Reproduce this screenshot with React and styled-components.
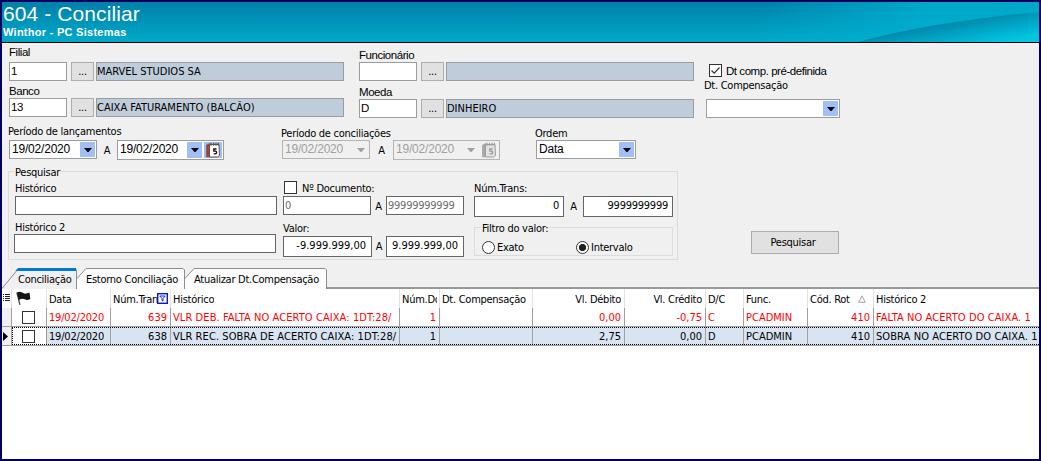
import React from "react";
import styled, { createGlobalStyle, css } from "styled-components";

const columns = [
  { key: "date", title: "Data" },
  { key: "trans", title: "Núm.Trans", right: true, filter: true },
  { key: "history", title: "Histórico" },
  { key: "doc", title: "Núm.Doc", right: true, clipped: true },
  { key: "comp", title: "Dt. Compensação" },
  { key: "debit", title: "Vl. Débito", right: true },
  { key: "credit", title: "Vl. Crédito", right: true },
  { key: "dc", title: "D/C" },
  { key: "func", title: "Func." },
  { key: "routine", title: "Cód. Rot", right: true, sorted: true },
  { key: "history2", title: "Histórico 2" },
];

const rows = [
  {
    date: "19/02/2020",
    trans: "639",
    history: "VLR DEB. FALTA NO ACERTO CAIXA: 1DT:28/",
    doc: "1",
    comp: "",
    debit: "0,00",
    credit: "-0,75",
    dc: "C",
    func: "PCADMIN",
    routine: "410",
    history2: "FALTA NO ACERTO DO CAIXA. 1",
    negative: true,
  },
  {
    date: "19/02/2020",
    trans: "638",
    history: "VLR REC. SOBRA DE ACERTO CAIXA: 1DT:28/",
    doc: "1",
    comp: "",
    debit: "2,75",
    credit: "0,00",
    dc: "D",
    func: "PCADMIN",
    routine: "410",
    history2: "SOBRA NO ACERTO DO CAIXA. 1",
    selected: true,
  },
];

function Lookup({ label, code, name, gap }) {
  return (
    <LookupField>
      <PlainLabel $gap={gap}>{label}</PlainLabel>
      <LookupLine>
        <CodeInput>{code}</CodeInput>
        <DotsButton>...</DotsButton>
        <NameBox>{name}</NameBox>
      </LookupLine>
    </LookupField>
  );
}

function Arrow({ color = "#000" }) {
  return (
    <svg width="8" height="4" viewBox="0 0 8 4">
      <path d="M0 0h8L4.500 4h-1z" fill={color} />
    </svg>
  );
}

function Combo({ width, disabled, calendar, children }) {
  return (
    <ComboBox $width={width} $disabled={disabled} $tall={calendar}>
      <span>{children}</span>
      <ComboButton $disabled={disabled}>
        <Arrow color={disabled ? "#a0a0a0" : "#000"} />
      </ComboButton>
      {calendar && (
        <ComboButton $disabled={disabled} $wide>
          <Calendar disabled={disabled} />
        </ComboButton>
      )}
    </ComboBox>
  );
}

function Calendar({ disabled }) {
  const red = disabled ? "#a8a8a8" : "#c03a22";
  const line = disabled ? "#9c9c9c" : "#5c5450";
  const page = disabled ? "#e2e2e2" : "#fff";
  return (
    <svg width="16" height="16" viewBox="0 0 16 16">
      <path d="M1.500 3L5 1.500v13L1.500 15z" fill={red} stroke={line} strokeWidth="0.6" />
      <path d="M4.500 2.500h9.500l.5 11-2 1.500h-8z" fill={page} stroke={line} />
      <path d="M6 .8v3M8.500 .8v3M11 .8v3M13.300 .8v3" stroke={line} strokeWidth="1.200" />
      <path
        d="M11.500 7H8.800v2.200h1.800q1.200.2 1 1.600-.2 1.200-2.900 1"
        fill="none"
        stroke={disabled ? line : "#111"}
        strokeWidth="1.300"
      />
    </svg>
  );
}

export default function App() {
  return (
    <Window>
      <GlobalStyle />
      <Header>
        <HeaderArt viewBox="0 0 1037 40" preserveAspectRatio="none">
          <defs>
            <linearGradient id="base" x1="0" y1="0" x2="0" y2="1">
              <stop offset="0" stopColor="#0080a9" />
              <stop offset="1" stopColor="#00a9c9" />
            </linearGradient>
            <linearGradient id="glow" gradientUnits="userSpaceOnUse" x1="760" y1="0" x2="900" y2="60">
              <stop offset="0" stopColor="#00b0d0" stopOpacity="0" />
              <stop offset="1" stopColor="#00b0d0" stopOpacity="0.8" />
            </linearGradient>
            <linearGradient id="wave" gradientUnits="userSpaceOnUse" x1="950" y1="20" x2="955" y2="48">
              <stop offset="0" stopColor="#0088ac" />
              <stop offset="1" stopColor="#00c6e2" />
            </linearGradient>
          </defs>
          <rect width="1037" height="40" fill="url(#base)" />
          <path d="M700 0H1037V40H700z" fill="url(#glow)" />
          <path d="M856 40Q930 20 1037 10V40z" fill="url(#wave)" />
        </HeaderArt>
        <Title>604 - Conciliar</Title>
        <Subtitle>Winthor - PC Sistemas</Subtitle>
      </Header>

      <Form>
        <LookupRow>
          <LookupColumn>
            <Lookup label="Filial" code="1" name="MARVEL STUDIOS SA" gap={3} />
            <Lookup label="Banco" code="13" name="CAIXA FATURAMENTO (BALCÃO)" gap={0} />
          </LookupColumn>
          <LookupColumn $second>
            <Lookup label="Funcionário" code="" name="" gap={0} />
            <Lookup label="Moeda" code="D" name="DINHEIRO" gap={0} />
          </LookupColumn>
          <CompColumn>
            <CheckLine>
              <CheckBox>
                <svg width="11" height="11" viewBox="0 0 11 11">
                  <path d="M1.500 5.500l2.700 2.700 5.300-5.700" fill="none" stroke="#333" strokeWidth="1.200" />
                </svg>
              </CheckBox>
              <PlainText>Dt comp. pré-definida</PlainText>
            </CheckLine>
            <CompLabel>Dt. Compensação</CompLabel>
            <Combo width={134} />
          </CompColumn>
        </LookupRow>

        <PeriodRow>
          <Period>
            <Label $lift={2}>Período de lançamentos</Label>
            <PeriodLine>
              <Combo width={88}>19/02/2020</Combo>
              <Until $width={20}>A</Until>
              <Combo width={107} calendar>
                19/02/2020
              </Combo>
            </PeriodLine>
          </Period>
          <Period $left={57}>
            <Label>Período de conciliações</Label>
            <PeriodLine>
              <Combo width={88} disabled>
                19/02/2020
              </Combo>
              <Until $width={23}>A</Until>
              <Combo width={107} disabled calendar>
                19/02/2020
              </Combo>
            </PeriodLine>
          </Period>
          <Period $left={35}>
            <Label>Ordem</Label>
            <Combo width={100}>Data</Combo>
          </Period>
        </PeriodRow>

        <SearchRow>
          <Group>
            <Legend>Pesquisar</Legend>
            <HistoryColumn>
              <Label>Histórico</Label>
              <Input $width={262} />
              <Label $top={5} $lift={-1}>
                Histórico 2
              </Label>
              <Input $width={262} $shift />
            </HistoryColumn>
            <ValueColumn>
              <CheckLine $tight>
                <CheckBox />
                <Label>Nº Documento:</Label>
              </CheckLine>
              <PeriodLine>
                <Input $width={88} $muted>
                  0
                </Input>
                <Until $width={15}>A</Until>
                <Input $width={78} $muted>
                  99999999999
                </Input>
              </PeriodLine>
              <Label $top={5}>Valor:</Label>
              <PeriodLine>
                <Input $width={89} $tall $spacing={0}>
                  -9.999.999,00
                </Input>
                <Until $width={14}>A</Until>
                <Input $width={78} $tall $spacing={0}>
                  9.999.999,00
                </Input>
              </PeriodLine>
            </ValueColumn>
            <TransColumn>
              <Label>Núm.Trans:</Label>
              <PeriodLine>
                <Input $width={90} $tall>
                  0
                </Input>
                <Until $width={19}>A</Until>
                <Input $width={90} $tall>
                  9999999999
                </Input>
              </PeriodLine>
              <FilterGroup>
                <Legend $inner>Filtro do valor:</Legend>
                <RadioItem $width={94}>
                  <Radio />
                  Exato
                </RadioItem>
                <RadioItem>
                  <Radio $checked />
                  Intervalo
                </RadioItem>
              </FilterGroup>
            </TransColumn>
          </Group>
          <SearchButton>Pesquisar</SearchButton>
        </SearchRow>

        <Tabs>
          <Tab $width={75} $active>
            <TabShape width={75} active />
            <span>Conciliação</span>
          </Tab>
          <Tab $width={108}>
            <TabShape width={108} />
            <span>Estorno Conciliação</span>
          </Tab>
          <Tab $width={142}>
            <TabShape width={142} />
            <span>Atualizar Dt.Compensação</span>
          </Tab>
        </Tabs>
      </Form>

      <Grid>
        <GridLine>
          <Cell $head $mark>
            <ColumnsIcon />
          </Cell>
          <Cell $head>
            <FlagIcon />
          </Cell>
          {columns.map((col) => (
            <Cell key={col.key} $head $right={col.right && !col.filter && !col.clipped && !col.sorted}>
              <HeadText>{col.title}</HeadText>
              {col.filter && <FilterIcon />}
              {col.sorted && <SortIcon />}
            </Cell>
          ))}
        </GridLine>
        {rows.map((row) => (
          <GridLine key={row.trans} $row $negative={row.negative} $selected={row.selected}>
            <Cell $mark $gray>
              {row.selected && (
                <svg width="5" height="9" viewBox="0 0 5 9">
                  <path d="M0 0l5 4.500L0 9z" />
                </svg>
              )}
            </Cell>
            <Cell $check>
              <CheckBox />
            </Cell>
            {columns.map((col) => (
              <Cell key={col.key} $right={col.right}>
                <CellText $spacing={col.key === "date" ? -0.2 : col.key.startsWith("history") ? 0.08 : 0}>
                  {row[col.key]}
                </CellText>
              </Cell>
            ))}
          </GridLine>
        ))}
      </Grid>
    </Window>
  );
}

// inactive tabs start half way up the slant, tucked behind the previous one
function TabShape({ width, active }) {
  const start = active ? "M0 20.500L16.500 .5" : "M0 10.500L9 .5";
  return (
    <svg width={width} height="21" viewBox={`0 0 ${width} 21`}>
      <path d={`${start}H${width - 2}l1.500 1.500V21H0z`} fill={active ? "#f0f0f0" : "#fcfcfc"} />
      <path d={`${start}H${width - 2}l1.500 1.500V21`} fill="none" stroke="#8a8c90" />
      {active && <path d={`M16 0H${width - 1}v3H13.500z`} fill="#0078d7" />}
    </svg>
  );
}

function ColumnsIcon() {
  return (
    <svg width="7" height="9" viewBox="0 0 7 9" shapeRendering="crispEdges">
      <path d="M0 .5h1M2 .5h5M0 2.500h1M2 2.500h5M0 4.500h1M2 4.500h5M0 6.500h1M2 6.500h5" stroke="#222" />
    </svg>
  );
}

function FlagIcon() {
  return (
    <svg width="17" height="15" viewBox="-2 0 17 15">
      <path d="M.8 1.500L4 14" stroke="#444" strokeWidth="1.200" />
      <path d="M1 1.500q3-1.500 5.500.3t7-.3l.8 6.500q-3.300 1.800-5.500.3t-6 .7z" fill="#151515" />
    </svg>
  );
}

function FilterIcon() {
  return (
    <svg width="11" height="11" viewBox="0 0 11 11">
      <rect x=".7" y=".7" width="9.600" height="9.600" fill="#fff" stroke="#0018e8" strokeWidth="1.400" />
      <path d="M2.800 3h5.400L6 5.500v2.700l-1-.8V5.500z" fill="#fff" stroke="#0018e8" strokeWidth=".9" />
    </svg>
  );
}

function SortIcon() {
  return (
    <SortSvg width="8" height="8" viewBox="0 0 8 8">
      <path d="M4 .8L7.300 7.300H.7z" fill="none" stroke="#999" strokeWidth=".9" />
    </SortSvg>
  );
}

// css in js

const GlobalStyle = createGlobalStyle`
  * {
    box-sizing: border-box;
  }
  body {
    margin: 0;
    font-family: "DejaVu Sans Condensed", "DejaVu Sans", sans-serif;
    font-stretch: condensed;
    font-size: 11px;
    letter-spacing: -0.27px;
    color: #000;
  }
  svg {
    display: block;
    flex: none;
  }
`;

const plain = css`
  font-family: "Liberation Sans", Arial, sans-serif;
  font-stretch: normal;
  font-size: 11.5px;
  letter-spacing: -0.45px;
`;

const SortSvg = styled.svg`
  margin-left: 8px;
`;

const Window = styled.div`
  display: flex;
  flex-direction: column;
  width: 1041px;
  height: 461px;
  border: 2px solid #00005c;
  background: #fff;
  overflow: hidden;
  white-space: nowrap;
`;

const Header = styled.header`
  position: relative;
  flex: none;
  height: 41px;
  border-bottom: 1px solid #000;
  padding-left: 1px;
  color: #fff;
  font-family: "Liberation Sans", Arial, sans-serif;
  font-stretch: normal;
`;

const HeaderArt = styled.svg`
  position: absolute;
  inset: 0;
  width: 100%;
  height: 40px;
`;

const Title = styled.h1`
  position: relative;
  margin: 0;
  font-size: 21px;
  font-weight: 400;
  line-height: 23px;
  letter-spacing: 0.1px;
`;

const Subtitle = styled.div`
  position: relative;
  font-size: 11px;
  font-weight: 700;
  line-height: 14px;
  letter-spacing: 0.27px;
`;

const Form = styled.main`
  flex: none;
  height: 246px;
  background: #f0f0f0;
`;

const LookupRow = styled.div`
  display: flex;
  height: 80px;
  padding-left: 7px;
`;

const LookupField = styled.div`
  margin-bottom: 3px;
`;

const LookupColumn = styled.div`
  padding-top: ${(props) => (props.$second ? 5 : 2)}px;
  margin-left: ${(props) => (props.$second ? 15 : 0)}px;
  ${LookupField} {
    margin-bottom: ${(props) => (props.$second ? 4 : 3)}px;
  }
`;

const PlainLabel = styled.div`
  ${plain}
  line-height: 14px;
  margin-bottom: ${(props) => props.$gap}px;
`;

const PlainText = styled.span`
  ${plain}
`;

const LookupLine = styled.div`
  display: flex;
  height: 19px;
`;

const CodeInput = styled.div`
  ${plain}
  width: 58px;
  border: 1px solid #9c9c9c;
  background: #fff;
  padding-left: 1px;
  line-height: 17px;
`;

const DotsButton = styled.div`
  width: 23px;
  margin: 0 2px 0 4px;
  border: 1px solid #adadad;
  background: #e1e1e1;
  text-align: center;
  line-height: 18px;
`;

const NameBox = styled.div`
  width: 248px;
  border: 1px solid #9c9c9c;
  background: #bfccda;
  line-height: 17px;
  letter-spacing: 0;
`;

const CompColumn = styled.div`
  padding: 21px 0 0 12px;
`;

const CompLabel = styled.div`
  margin: 2px 0 6px -2px;
  line-height: 14px;
`;

const CheckLine = styled.div`
  display: flex;
  align-items: ${(props) => (props.$tight ? "flex-start" : "center")};
  gap: ${(props) => (props.$tight ? 5 : 4)}px;
  height: ${(props) => (props.$tight ? 14 : 13)}px;
  padding-left: ${(props) => (props.$tight ? 1 : 3)}px;
`;

const CheckBox = styled.span`
  flex: none;
  width: 13px;
  height: 13px;
  border: 1px solid #333;
  background: #fff;
  ${CheckLine} & {
    margin-top: -1px;
  }
`;

const Label = styled.div`
  line-height: 14px;
  margin-top: ${(props) => props.$top || 0}px;
  position: relative;
  top: ${(props) => -(props.$lift || 0)}px;
`;

const ComboBox = styled.div`
  ${plain}
  font-size: 12px;
  letter-spacing: -0.2px;
  display: flex;
  align-items: stretch;
  gap: 2px;
  flex: none;
  width: ${(props) => props.$width}px;
  height: ${(props) => (props.$tall ? 20 : 19)}px;
  padding: 1px 1px 1px 2px;
  border: 1px solid ${(props) => (props.$disabled ? "#b4b4b4" : "#9c9c9c")};
  background: ${(props) => (props.$disabled ? "#f0f0f0" : "#fff")};
  color: ${(props) => (props.$disabled ? "#a0a0a0" : "#000")};
  line-height: 15px;
  span {
    flex: 1;
  }
`;

const ComboButton = styled.i`
  display: flex;
  align-items: center;
  justify-content: center;
  width: ${(props) => (props.$wide ? 18 : 15)}px;
  background: ${(props) => (props.$disabled ? "transparent" : "#a1bff7")};
`;

const PeriodRow = styled.div`
  display: flex;
  height: 43px;
  padding: 4px 0 0 6px;
`;

const Period = styled.div`
  margin-left: ${(props) => props.$left || 0}px;
  & > div + div {
    margin: -1px 0 0 1px;
  }
`;

const PeriodLine = styled.div`
  display: flex;
`;

const Until = styled.span`
  width: ${(props) => props.$width}px;
  text-align: center;
  line-height: 21px;
`;

const SearchRow = styled.div`
  display: flex;
  height: 102px;
  padding-left: 6px;
`;

const Group = styled.section`
  position: relative;
  display: flex;
  width: 670px;
  height: 89px;
  margin-top: 5px;
  padding: 10px 0 0 6px;
  border: 1px solid #dcdcdc;
`;

const Legend = styled.span`
  position: absolute;
  top: -6px;
  left: ${(props) => (props.$inner ? 6 : 5)}px;
  padding: 0 1px;
  background: #f0f0f0;
  line-height: 14px;
`;

const HistoryColumn = styled.div`
  width: 268px;
`;

const ValueColumn = styled.div`
  width: 191px;
`;

const TransColumn = styled.div`
  width: 200px;
`;

const Input = styled.div`
  flex: none;
  width: ${(props) => props.$width}px;
  height: ${(props) => (props.$tall ? 21 : 19)}px;
  margin-left: ${(props) => (props.$shift ? -1 : 0)}px;
  padding: 0 ${(props) => (props.$tall ? (props.$spacing === 0 ? 5 : 4) : 1)}px;
  border: 1px solid #646464;
  background: #fff;
  color: ${(props) => (props.$muted ? "#6d6d6d" : "#000")};
  text-align: ${(props) => (props.$tall ? "right" : "left")};
  line-height: 17px;
  letter-spacing: ${(props) => props.$spacing ?? -0.25}px;
`;

const FilterGroup = styled.section`
  position: relative;
  display: flex;
  width: 199px;
  height: 29px;
  margin-top: 10px;
  padding: 9px 0 0 7px;
  border: 1px solid #dcdcdc;
`;

const RadioItem = styled.div`
  display: flex;
  align-items: center;
  gap: 2px;
  width: ${(props) => (props.$width ? props.$width + "px" : "auto")};
  height: 20px;
`;

const Radio = styled.span`
  width: 13px;
  height: 13px;
  border: 1px solid #333;
  border-radius: 50%;
  background: ${(props) => (props.$checked ? "radial-gradient(circle, #222 3.2px, #fff 4px)" : "#fff")};
`;

const SearchButton = styled.button`
  width: 88px;
  height: 23px;
  margin: 65px 0 0 73px;
  padding: 0 4px 0 0;
  border: 1px solid #adadad;
  background: #e1e1e1;
  font: inherit;
  letter-spacing: inherit;
`;

const Tabs = styled.nav`
  display: flex;
  height: 21px;
  border-bottom: 2px solid #96989c;
`;

const Tab = styled.div`
  display: grid;
  width: ${(props) => props.$width}px;
  height: 21px;
  line-height: 24px;
  & > * {
    grid-area: 1 / 1;
  }
  span {
    z-index: 1;
    padding-left: ${(props) => (props.$active ? 16 : 9)}px;
  }
`;

const Grid = styled.section`
  flex: 1;
  background: #fff;
`;

const GridLine = styled.div`
  position: relative;
  display: grid;
  grid-template-columns: 10px 35px 64px 60px 229px 40px 93px 92px 81px 38px 64px 66px 1fr;
  height: 19px;
  color: ${(props) => (props.$negative ? "#f00" : "#000")};
  background: ${(props) => (props.$selected ? "#d8e4f1" : "#fff")};
  border-bottom: ${(props) => (props.$row ? "1px solid #a0a0a0" : "none")};
  &::after {
    content: "";
    display: ${(props) => (props.$selected ? "block" : "none")};
    position: absolute;
    inset: 0 0 0 10px;
    border: 1px dotted #000;
    border-right: none;
  }
`;

const Cell = styled.div`
  display: flex;
  align-items: center;
  justify-content: ${(props) => (props.$right ? "flex-end" : "flex-start")};
  min-width: 0;
  overflow: hidden;
  padding: 0 ${(props) => (props.$right ? 3 : 2)}px 0 2px;
  border-right: 1px solid ${(props) => (props.$head ? "#e2e2e2" : "#a0a0a0")};
  ${(props) => props.$mark && "padding: 0 1px;"}
  ${(props) => props.$gray && "background: #f0f0f0;"}
  ${(props) => props.$check && "justify-content: center; padding: 0 3px 0 1px; background: #fff;"}
  &:last-child {
    border-right: none;
    padding-right: 0;
  }
`;

const CellText = styled.span`
  letter-spacing: ${(props) => props.$spacing}px;
`;

const HeadText = styled.span`
  overflow: hidden;
  padding-top: 2px;
`;
